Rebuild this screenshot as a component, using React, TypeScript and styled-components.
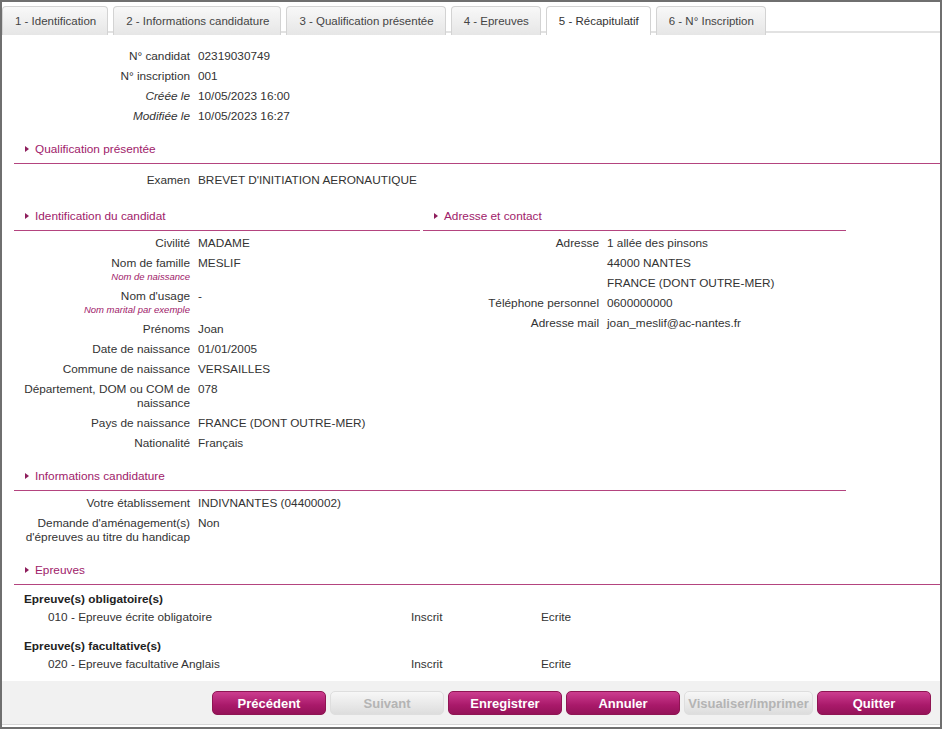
import React from "react";
import styled, { createGlobalStyle, css } from "styled-components";

const Global = createGlobalStyle`
  html, body { margin: 0; padding: 0; background: #fff; }
  body { font-family: "Liberation Sans", Arial, sans-serif; font-size: 11.8px; color: #333; }
  * { box-sizing: border-box; }
`;

const Frame = styled.div`
  width: 942px;
  height: 729px;
  border: 2px solid #6f6f6f;
  display: flex;
  flex-direction: column;
  background: #fff;
  overflow: hidden;
`;

const TabBar = styled.div`
  display: flex;
  gap: 5px;
  padding-top: 4px;
  border-bottom: 2px solid #e2e2e2;
  height: 31px;
`;

const Tab = styled.div<{ $active?: boolean }>`
  height: 29px;
  padding: 0 11px 0 12px;
  display: flex;
  align-items: center;
  font-size: 11.5px;
  color: #444;
  border: 1px solid #d3d3d3;
  border-bottom: none;
  border-radius: 4px 4px 0 0;
  background: linear-gradient(#f8f8f8, #e6e6e6);
  ${(p) =>
    p.$active &&
    css`
      background: #fff;
      color: #333;
    `}
`;

const Content = styled.div`
  flex: 1;
  padding: 13px 0 0 12px;
`;

const Row = styled.div`
  display: grid;
  grid-template-columns: 176px 1fr;
  column-gap: 8px;
  padding: 3px 0;
  line-height: 14px;
`;

const Label = styled.div<{ $italic?: boolean }>`
  text-align: right;
  font-style: ${(p) => (p.$italic ? "italic" : "normal")};
`;

const Hint = styled.div`
  font-size: 9.5px;
  line-height: 13px;
  font-style: italic;
  color: #a0206a;
`;

const Value = styled.div``;

const Header = styled.div<{ $mt: number; $width?: number }>`
  margin-top: ${(p) => p.$mt}px;
  display: flex;
  align-items: center;
  gap: 6px;
  padding: 0 0 7px 11px;
  line-height: 14px;
  color: #a0216a;
  border-bottom: 1px solid #b4447f;
  ${(p) => (p.$width ? `width: ${p.$width}px;` : "")}
`;

const Arrow = styled.span`
  width: 0;
  height: 0;
  border-top: 3.5px solid transparent;
  border-bottom: 3.5px solid transparent;
  border-left: 4px solid #8e1e5c;
`;

const Body = styled.div<{ $pt?: number }>`
  padding-top: ${(p) => p.$pt ?? 3}px;
`;

const Columns = styled.div`
  display: grid;
  grid-template-columns: 406px 423px;
  column-gap: 3px;
`;

const Group = styled.div<{ $mt: number }>`
  margin-top: ${(p) => p.$mt}px;
  padding-left: 10px;
`;

const GroupTitle = styled.div`
  font-weight: bold;
  color: #222;
  line-height: 18px;
`;

const Item = styled.div`
  display: grid;
  grid-template-columns: 363px 130px 1fr;
  padding-left: 24px;
  line-height: 18px;
`;

const Footer = styled.div`
  display: flex;
  justify-content: flex-end;
  gap: 4px;
  padding: 10px 9px 9px;
  background: #f1f1f1;
  border-bottom: 1px solid #d6d6d6;
  margin-bottom: 2px;
`;

const Button = styled.button<{ $disabled?: boolean; $wide?: boolean }>`
  height: 24px;
  width: ${(p) => (p.$wide ? "129px" : "114px")};
  padding: 0;
  border-radius: 5px;
  font-family: "Liberation Sans", Arial, sans-serif;
  font-size: 13px;
  font-weight: bold;
  color: #fff;
  border: 1px solid #8f1553;
  background: linear-gradient(#cc3d8f, #a9196a 60%, #951359);
  ${(p) =>
    p.$disabled &&
    css`
      color: #b4b4b4;
      border: 1px solid #dedede;
      background: linear-gradient(#f7f7f7, #dddddd);
    `}
`;

type F = { label: string; value?: string; hint?: string; italic?: boolean };

const Field = ({ label, value, hint, italic }: F) => (
  <Row>
    <Label $italic={italic}>
      {label}
      {hint && <Hint>{hint}</Hint>}
    </Label>
    <Value>{value}</Value>
  </Row>
);

const SectionHeader = ({ title, mt, width }: { title: string; mt: number; width?: number }) => (
  <Header $mt={mt} $width={width}>
    <Arrow />
    {title}
  </Header>
);

const tabs = [
  "1 - Identification",
  "2 - Informations candidature",
  "3 - Qualification présentée",
  "4 - Epreuves",
  "5 - Récapitulatif",
  "6 - N° Inscription",
];

export default function App() {
  return (
    <>
      <Global />
      <Frame>
        <TabBar>
          {tabs.map((t, i) => (
            <Tab key={t} $active={i === 4}>
              {t}
            </Tab>
          ))}
        </TabBar>
        <Content>
          <Field label="N° candidat" value="02319030749" />
          <Field label="N° inscription" value="001" />
          <Field label="Créée le" value="10/05/2023 16:00" italic />
          <Field label="Modifiée le" value="10/05/2023 16:27" italic />

          <SectionHeader title="Qualification présentée" mt={16} />
          <Body $pt={6}>
            <Field label="Examen" value="BREVET D'INITIATION AERONAUTIQUE" />
          </Body>

          <Columns>
            <div>
              <SectionHeader title="Identification du candidat" mt={19} />
              <Body $pt={2}>
                <Field label="Civilité" value="MADAME" />
                <Field label="Nom de famille" value="MESLIF" hint="Nom de naissance" />
                <Field label="Nom d'usage" value="-" hint="Nom marital par exemple" />
                <Field label="Prénoms" value="Joan" />
                <Field label="Date de naissance" value="01/01/2005" />
                <Field label="Commune de naissance" value="VERSAILLES" />
                <Field label="Département, DOM ou COM de naissance" value="078" />
                <Field label="Pays de naissance" value="FRANCE (DONT OUTRE-MER)" />
                <Field label="Nationalité" value="Français" />
              </Body>
            </div>
            <div>
              <SectionHeader title="Adresse et contact" mt={19} />
              <Body $pt={2}>
                <Field label="Adresse" value="1 allée des pinsons" />
                <Field label="" value="44000 NANTES" />
                <Field label="" value="FRANCE (DONT OUTRE-MER)" />
                <Field label="Téléphone personnel" value="0600000000" />
                <Field label="Adresse mail" value="joan_meslif@ac-nantes.fr" />
              </Body>
            </div>
          </Columns>

          <SectionHeader title="Informations candidature" mt={16} width={832} />
          <Body $pt={2}>
            <Field label="Votre établissement" value="INDIVNANTES (04400002)" />
            <Field label="Demande d'aménagement(s) d'épreuves au titre du handicap" value="Non" />
          </Body>

          <SectionHeader title="Epreuves" mt={16} />
          <Group $mt={5}>
            <GroupTitle>Epreuve(s) obligatoire(s)</GroupTitle>
            <Item>
              <span>010 - Epreuve écrite obligatoire</span>
              <span>Inscrit</span>
              <span>Ecrite</span>
            </Item>
          </Group>
          <Group $mt={11}>
            <GroupTitle>Epreuve(s) facultative(s)</GroupTitle>
            <Item>
              <span>020 - Epreuve facultative Anglais</span>
              <span>Inscrit</span>
              <span>Ecrite</span>
            </Item>
          </Group>
        </Content>
        <Footer>
          <Button>Précédent</Button>
          <Button $disabled>Suivant</Button>
          <Button>Enregistrer</Button>
          <Button>Annuler</Button>
          <Button $disabled $wide>
            Visualiser/imprimer
          </Button>
          <Button>Quitter</Button>
        </Footer>
      </Frame>
    </>
  );
}
